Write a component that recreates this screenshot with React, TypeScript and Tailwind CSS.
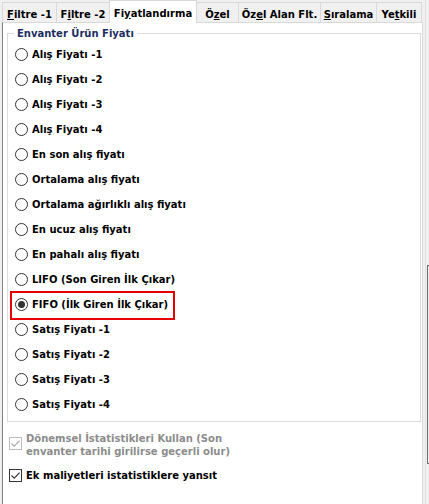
import React from "react"

type Tab = { pre: string, key: string, post: string, w: string, cls: string }

const tabs: Tab[] = [
  { pre: "", key: "F", post: "iltre -1", w: "w-[54px]", cls: "border-l border-t" },
  { pre: "F", key: "i", post: "ltre -2", w: "w-[53px]", cls: "border-l border-t" },
  { pre: "Fi", key: "y", post: "atlandırma", w: "w-[88px]", cls: "selected" },
  { pre: "Ö", key: "z", post: "el", w: "w-[41px]", cls: "border-t" },
  { pre: "Öz", key: "e", post: "l Alan Flt.", w: "w-[82px]", cls: "border-l border-t" },
  { pre: "", key: "S", post: "ıralama", w: "w-[56px]", cls: "border-l border-t" },
  { pre: "Ye", key: "t", post: "kili", w: "w-[46px]", cls: "border-l border-t border-r" },
]

const options = [
  "Alış Fiyatı -1",
  "Alış Fiyatı -2",
  "Alış Fiyatı -3",
  "Alış Fiyatı -4",
  "En son alış fiyatı",
  "Ortalama alış fiyatı",
  "Ortalama ağırlıklı alış fiyatı",
  "En ucuz alış fiyatı",
  "En pahalı alış fiyatı",
  "LIFO (Son Giren İlk Çıkar)",
  "FIFO (İlk Giren İlk Çıkar)",
  "Satış Fiyatı -1",
  "Satış Fiyatı -2",
  "Satış Fiyatı -3",
  "Satış Fiyatı -4",
]

function Radio({ checked }: { checked: boolean }) {
  return (
    <span className="w-[13px] h-[13px] shrink-0 rounded-full border border-[#333333] bg-white flex items-center justify-center">
      {checked && <span className="w-[7px] h-[7px] rounded-full bg-[#333333]" />}
    </span>
  )
}

function CheckBox({ disabled }: { disabled?: boolean }) {
  return (
    <span className={"w-[13px] h-[13px] shrink-0 border bg-white flex " + (disabled ? "border-[#bcbcbc]" : "border-[#333333]")}>
      <svg width="11" height="11" viewBox="0 0 11 11">
        <path d="M1.5 5.5 L4.2 8.2 L9.6 2.6" fill="none" stroke={disabled ? "#a8a8a8" : "#333333"} strokeWidth="1.1" />
      </svg>
    </span>
  )
}

export default function App() {
  return (
    <div className="w-[429px] h-[504px] bg-[#f0f0f0] flex overflow-hidden font-['DejaVu_Sans',sans-serif] font-bold text-[10px] leading-[13px] text-black">
      <div className="w-[423px] pl-[2px] flex flex-col">
        {/* tab headers */}
        <div className="flex items-end h-[22px]">
          {tabs.map((t, i) =>
            t.cls === "selected" ? (
              <div key={i} className={`${t.w} h-[23px] -mb-px relative z-10 bg-white border-l border-t border-r border-[#d9d9d9] pt-[6px] text-center whitespace-nowrap`}>
                {t.pre}<u className="underline-offset-[1px]">{t.key}</u>{t.post}
              </div>
            ) : (
              <div key={i} className={`${t.w} h-[20px] ${t.cls} border-[#d9d9d9] bg-[#f0f0f0] pt-[5px] text-center whitespace-nowrap`}>
                {t.pre}<u className="underline-offset-[1px]">{t.key}</u>{t.post}
              </div>
            )
          )}
        </div>

        {/* tab page */}
        <div className="flex-1 bg-white border-t border-t-[#d9d9d9] border-l border-l-[#7f7f7f] border-r border-r-[#d9d9d9] pt-[4px]">
          <fieldset className="ml-[4px] w-[414px] border border-[#dcdcdc] pt-[2px] pb-[4px]">
            <legend className="ml-[6px] px-[3px] text-[#1b2d63]">Envanter Ürün Fiyatı</legend>
            {options.map((o, i) => (
              <div key={i} className="relative h-[25px] flex items-center gap-[4px] pl-[7px] whitespace-nowrap">
                <Radio checked={i === 10} />
                <span>{o}</span>
                {i === 10 && (
                  <span className="absolute left-[2px] top-[-1px] w-[165px] h-[29px] border-2 border-[#e60000]" />
                )}
              </div>
            ))}
          </fieldset>

          <div className="mt-[10px] pl-[6px] flex items-start gap-[4px] text-[#8c8c8c]">
            <span className="mt-[5px]"><CheckBox disabled /></span>
            <span>Dönemsel İstatistikleri Kullan (Son<br />envanter tarihi girilirse geçerli olur)</span>
          </div>

          <div className="mt-[11px] pl-[6px] flex items-center gap-[4px]">
            <CheckBox />
            <span>Ek maliyetleri istatistiklere yansıt</span>
          </div>
        </div>
      </div>

      <div className="w-[3px] border-r border-[#e3e3e3]" />
      <div className="ml-px pt-[265px]">
        <div className="w-[2px] h-[199px] border-l border-t border-b border-[#6d6d6d]" />
      </div>
    </div>
  )
}
